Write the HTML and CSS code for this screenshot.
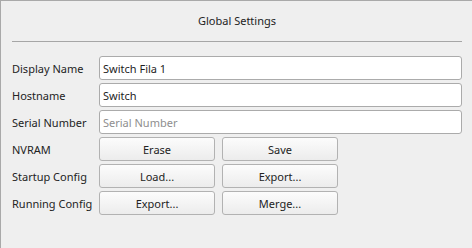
FILE: index.html
```html
<!DOCTYPE html>
<html>
<head>
<meta charset="utf-8">
<link rel="stylesheet" href="styles.css">
</head>
<body>
<div class="panel">
  <div class="title">Global Settings</div>
  <div class="sep"></div>
  <div class="form">
    <div class="label">Display Name</div>
    <div class="field"><input class="input" type="text" value="Switch Fila 1"></div>
    <div class="label">Hostname</div>
    <div class="field"><input class="input" type="text" value="Switch"></div>
    <div class="label">Serial Number</div>
    <div class="field"><input class="input" type="text" placeholder="Serial Number"></div>
    <div class="label">NVRAM</div>
    <div class="buttons"><button class="btn">Erase</button><button class="btn">Save</button></div>
    <div class="label">Startup Config</div>
    <div class="buttons"><button class="btn">Load...</button><button class="btn">Export...</button></div>
    <div class="label">Running Config</div>
    <div class="buttons"><button class="btn">Export...</button><button class="btn">Merge...</button></div>
  </div>
</div>
</body>
</html>
```
FILE: styles.css
```css
html, body {
  margin: 0;
  padding: 0;
  background: #efefef;
  font-family: "Noto Sans", "Open Sans", sans-serif;
  font-size: 11px;
  color: #232323;
}
.panel {
  width: 472px;
  height: 248px;
  box-sizing: border-box;
  border-top: 1px solid #a9a9a9;
  border-left: 1px solid #a9a9a9;
  padding: 0 10px 0 11px;
}
.title {
  text-align: center;
  height: 40px;
  line-height: 39px;
}
.sep {
  height: 1px;
  background: #a6a6a6;
}
.form {
  display: grid;
  grid-template-columns: 87px 1fr;
  row-gap: 3px;
  margin-top: 14px;
}
.label {
  display: flex;
  align-items: center;
  height: 24px;
  white-space: nowrap;
}
.field {
  display: flex;
}
.input {
  flex: 1;
  height: 24px;
  box-sizing: border-box;
  border: 1px solid #ababab;
  border-radius: 3px;
  background: #fff;
  font: inherit;
  color: #1e1e1e;
  padding: 0 3px;
  margin: 0;
  outline: none;
}
.input::placeholder {
  color: #8e8e8e;
}
.buttons {
  display: flex;
  gap: 7px;
}
.btn {
  width: 116px;
  height: 24px;
  box-sizing: border-box;
  border: 1px solid #b2b2b2;
  border-radius: 3px;
  background: linear-gradient(#fcfcfc, #ececec);
  font: inherit;
  color: #232323;
  padding: 0;
  margin: 0;
}
```
